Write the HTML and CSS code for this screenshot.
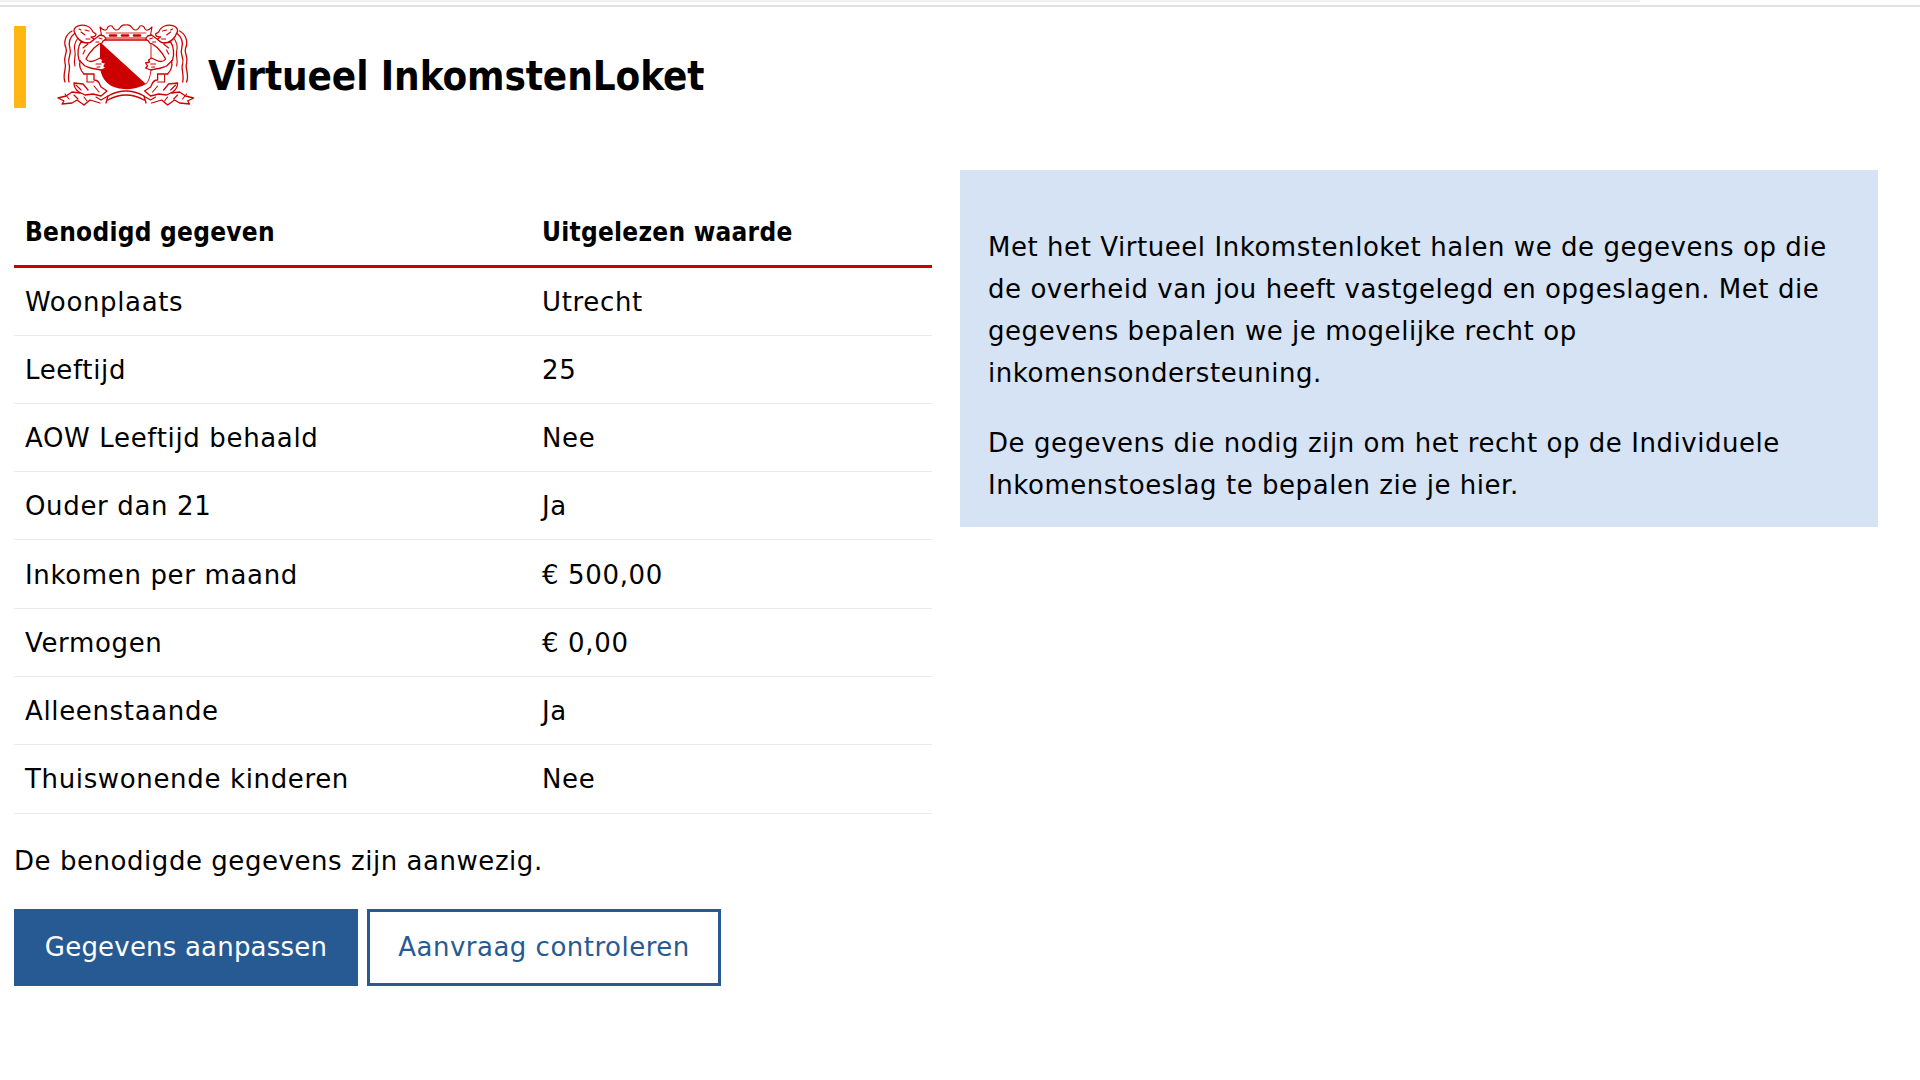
FILE: index.html
```html
<!DOCTYPE html>
<html lang="nl">
<head>
<meta charset="utf-8">
<title>Virtueel InkomstenLoket</title>
<link rel="stylesheet" href="styles.css">
</head>
<body>
<div class="topline"><div class="topline-inner"></div></div>
<header class="header">
  <span class="accent"></span>
  <svg class="logo" viewBox="0 0 150 90" fill="none" stroke="#cc0000" stroke-width="1.1" stroke-linejoin="round" stroke-linecap="round">
    <defs>
      <g id="lion">
        <path d="M22 11 C16 14 13 22 16 28 C18 33 13 36 15 43 C17 48 12 54 15 62" stroke-width="1.3"/>
        <path d="M25 13 C20 17 18 23 20 29 C22 34 17 38 19 44 C21 49 17 55 19 62" stroke-width="1.3"/>
        <path d="M28 18 C24 23 24 28 25 32 C26 37 23 40 25 46"/>
        <path d="M24 11 C24 6 31 4 37 6 C40 7 42 10 43 12 L46 14 C46 17 43 17 41 17 L44 19 C44 22 41 23 38 23 C33 23 27 20 24 11 Z" fill="#fff" stroke-width="1.3"/>
        <path d="M35 10 l4 1 M31 12 l4 3 M29 9 l2 1 M36 19 l4 0"/>
        <path d="M37 23 C40 24 43 20 46 18 L50 15 L54 16 L56 19 L53 21 L52 23 L49 24 L44 28 C41 31 38 35 36 39 C38 42 42 42 46 40 L50 38 L53 40 L52 42 L56 43 L54 46 L56 48 L51 50 L46 49 C42 49 38 47 35 46 L29 40 C27 34 28 26 31 22 Z" fill="#fff" stroke-width="1.3"/>
        <path d="M49 18 l3 1 M46 22 l3 0 M46 44 l5 0 M47 47 l3 0 M33 28 L38 24 M33 34 L35 30"/>
        <path d="M30 41 C29 46 31 51 34 54" stroke-width="1.3"/>
        <path d="M34 54 H44 V60 C47 60 49 62 50 65 L51 67 L57 71 L51 76 L43 74 L35 75 L29 72 C26 70 24 66 24 63 L33 64 L38 70" fill="#fff" stroke-width="1.3"/>
        <path d="M37 55 V62 H44 M26 65 L31 70 M44 66 L49 72"/>
        <path d="M30 73 L22 72 L16 76 L8 78 L14 81 L12 84 L22 83 L27 80 L34 85 L40 80 L50 83" stroke-width="1.3"/>
        <path d="M15 74 L19 79 M24 75 L28 79 M34 77 L37 81"/>
        <path d="M46 77 L51 80 L58 76"/>
      </g>
    </defs>
    <path d="M52 18 L50 7 Q55 12 57 9 Q58 5 62 6 Q65 12 69 9 Q72 4 76 5 Q80 4 83 9 Q87 12 90 6 Q94 5 95 9 Q97 12 102 7 L100 18 Z"/>
    <path d="M51 20 H101" stroke-width="1.4"/>
    <path d="M60 15.5 h6 M72 15.5 h6 M84 15.5 h6" stroke-width="2.6"/>
    <path d="M56 13 H96" stroke-width="0.8"/>
    <path d="M50 22 L96 64 Q86 70 74 69 Q53 68 50 48 Z" fill="#cc0000" stroke="none"/>
    <path d="M101 21 V50 Q100 60 96 64" stroke-width="0.9"/>
    <use href="#lion"/>
    <use href="#lion" transform="translate(151.6 0) scale(-1 1)"/>
    <path d="M58 76 Q76 66 94 76 M58 80 Q76 70 94 80 M58 76 L56 83 M94 76 L96 83" stroke-width="1.3"/>
  </svg>
  <h1 class="title">Virtueel InkomstenLoket</h1>
</header>
<main class="content">
  <section class="left">
    <table class="data">
      <thead><tr><th class="col1">Benodigd gegeven</th><th>Uitgelezen waarde</th></tr></thead>
      <tbody>
        <tr><td>Woonplaats</td><td>Utrecht</td></tr>
        <tr><td>Leeftijd</td><td>25</td></tr>
        <tr><td>AOW Leeftijd behaald</td><td>Nee</td></tr>
        <tr><td>Ouder dan 21</td><td>Ja</td></tr>
        <tr><td>Inkomen per maand</td><td>€ 500,00</td></tr>
        <tr><td>Vermogen</td><td>€ 0,00</td></tr>
        <tr><td>Alleenstaande</td><td>Ja</td></tr>
        <tr><td>Thuiswonende kinderen</td><td>Nee</td></tr>
      </tbody>
    </table>
    <p class="status">De benodigde gegevens zijn aanwezig.</p>
    <div class="actions">
      <a class="btn btn-primary">Gegevens aanpassen</a>
      <a class="btn btn-secondary">Aanvraag controleren</a>
    </div>
  </section>
  <aside class="info">
    <p>Met het Virtueel Inkomstenloket halen we de gegevens op die de overheid van jou heeft vastgelegd en opgeslagen. Met die gegevens bepalen we je mogelijke recht op inkomensondersteuning.</p>
    <p>De gegevens die nodig zijn om het recht op de Individuele Inkomenstoeslag te bepalen zie je hier.</p>
  </aside>
</main>
</body>
</html>
```
FILE: styles.css
```css
* { box-sizing: border-box; }
html, body { margin: 0; padding: 0; background: #fff; }
body {
  font-family: "DejaVu Sans", sans-serif;
  font-size: 26px;
  line-height: 42px;
  letter-spacing: 0.55px;
  color: #000;
  height: 1080px;
  overflow: hidden;
}
.topline { height: 7px; border-bottom: 2px solid #e2e2e2; }
.topline-inner { width: 1640px; height: 2px; background: #f0f0f0; }
.header { display: flex; align-items: center; height: 82px; margin-top: 19px; padding-left: 14px; }
.accent { width: 12px; height: 82px; background: #ffb612; }
.logo { width: 150px; height: 90px; margin: -4px -7px 0 24px; flex: none; filter: blur(0.3px); }
.title {
  margin: 17px 0 0 15px;
  font-family: "DejaVu Sans Condensed", "DejaVu Sans", sans-serif;
  font-size: 40px;
  font-weight: 700;
  line-height: 50px;
  letter-spacing: -0.1px;
}
.content { display: flex; align-items: flex-start; gap: 28px; margin-top: 62px; padding-left: 14px; }
.left { width: 918px; }
.info { width: 918px; height: 357px; padding: 56px 28px 0; background: #d5e3f5; }
.info p { margin: 0 0 28px; }
.data { width: 100%; border-collapse: collapse; table-layout: fixed; }
.col1 { width: 517px; }
.data th {
  height: 96px;
  padding: 29px 11px 0;
  text-align: left;
  font-family: "DejaVu Sans Condensed", "DejaVu Sans", sans-serif;
  font-weight: 700;
  letter-spacing: 0.25px;
  border-bottom: 3px solid #cc0000;
}
.data td { height: 68.3px; padding: 1px 11px 0; border-bottom: 1px solid #eaeaea; letter-spacing: 0.65px; }
.data tbody tr:first-child td { height: 69px; padding-top: 2px; }
.status { margin: 26px 0 27px; }
.actions { display: flex; gap: 9px; }
.btn { display: block; height: 77px; line-height: 73px; text-align: center; border: 2px solid #275a92; }
.btn-primary { width: 344px; background: #275a92; color: #fff; letter-spacing: 0.2px; }
.btn-secondary { width: 354px; background: #fff; color: #275a92; border-width: 3px; line-height: 71px; letter-spacing: 0.5px; }
```
